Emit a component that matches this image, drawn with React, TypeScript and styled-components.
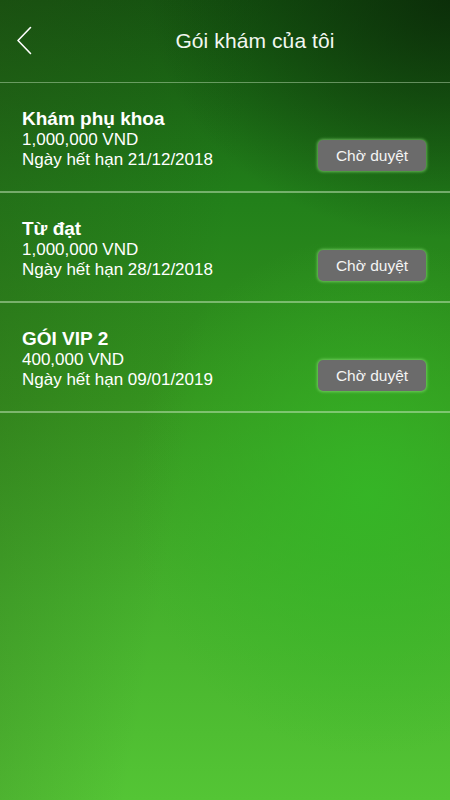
import { createGlobalStyle, styled } from "styled-components";

const GlobalStyle = createGlobalStyle`
  html, body {
    margin: 0;
    padding: 0;
    height: 100%;
  }
  body {
    font-family: "Liberation Sans", Arial, sans-serif;
    -webkit-font-smoothing: antialiased;
  }
  #root {
    min-height: 100%;
  }
`;

type Pack = {
  name: string;
  price: string;
  expires: string;
  status: string;
};

const packs: Pack[] = [
  { name: "Khám phụ khoa", price: "1,000,000 VND", expires: "21/12/2018", status: "Chờ duyệt" },
  { name: "Từ đạt", price: "1,000,000 VND", expires: "28/12/2018", status: "Chờ duyệt" },
  { name: "GÓI VIP 2", price: "400,000 VND", expires: "09/01/2019", status: "Chờ duyệt" },
];

const Screen = styled.div`
  width: 450px;
  height: 800px;
  overflow: hidden;
  color: #fff;
  background:
    radial-gradient(ellipse 240px 260px at 82% 62%, rgba(52, 184, 38, 0.85), rgba(52, 184, 38, 0) 100%),
    radial-gradient(ellipse 300px 240px at 100% 0%, rgba(8, 30, 6, 0.7), rgba(8, 30, 6, 0) 100%),
    linear-gradient(100deg, rgba(40, 70, 20, 0.3) 0%, rgba(40, 70, 20, 0) 45%),
    linear-gradient(to bottom, #145510 0%, #22801a 25%, #35951f 50%, #45b02c 75%, #54c535 100%);
`;

const Header = styled.div`
  height: 82px;
  display: flex;
  align-items: center;
  border-bottom: 1px solid rgba(200, 230, 190, 0.45);
`;

const BackButton = styled.button`
  width: 60px;
  height: 82px;
  padding: 0 0 0 16px;
  border: 0;
  background: none;
  display: flex;
  align-items: center;
  cursor: pointer;
`;

const Title = styled.h1`
  flex: 1;
  margin: 0;
  text-align: center;
  font-size: 21px;
  font-weight: 400;
  letter-spacing: 0.1px;
  color: #f2f7f0;
`;

const Row = styled.div`
  height: 110px;
  box-sizing: border-box;
  padding: 24px 24px 0 22px;
  display: flex;
  justify-content: space-between;
  align-items: flex-start;
  border-bottom: 2px solid rgba(200, 230, 190, 0.5);
`;

const Info = styled.div`
  display: flex;
  flex-direction: column;
`;

const Name = styled.div`
  font-size: 19px;
  font-weight: 700;
  line-height: 23px;
`;

const Line = styled.div`
  font-size: 17px;
  line-height: 20px;
`;

const StatusButton = styled.div`
  margin-top: 33px;
  width: 108px;
  height: 31px;
  border-radius: 5px;
  background: #6b6b6b;
  box-shadow: 0 0 3px 1px rgba(150, 230, 130, 0.6);
  display: flex;
  align-items: center;
  justify-content: center;
  font-size: 15.5px;
  color: #f4f4f4;
`;

const ChevronLeft = () => (
  <svg width="16" height="30" viewBox="0 0 16 30" fill="none">
    <path d="M14.5 1.5 L2 14.5 L14.5 27.5" stroke="#fff" strokeWidth="1.6" strokeLinecap="round" strokeLinejoin="round" />
  </svg>
);

const App = () => {
  return (
    <Screen>
      <GlobalStyle />
      <Header>
        <BackButton>
          <ChevronLeft />
        </BackButton>
        <Title>Gói khám của tôi</Title>
      </Header>
      {packs.map((p, idx) => (
        <Row key={idx}>
          <Info>
            <Name>{p.name}</Name>
            <Line>{p.price}</Line>
            <Line>Ngày hết hạn {p.expires}</Line>
          </Info>
          <StatusButton>{p.status}</StatusButton>
        </Row>
      ))}
    </Screen>
  );
};

export default App;
